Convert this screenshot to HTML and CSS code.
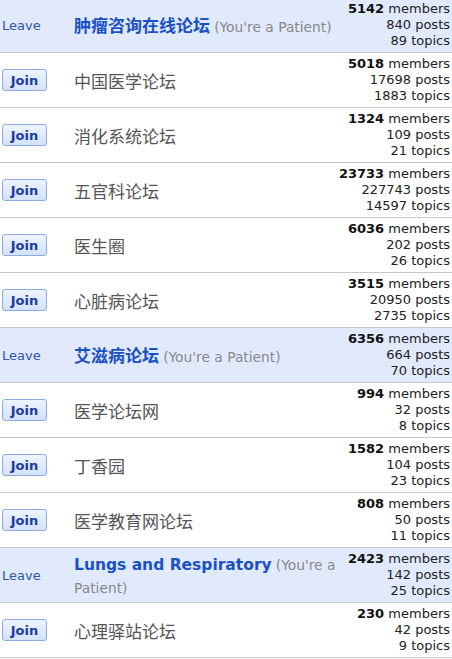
FILE: index.html
```
<!DOCTYPE html>
<html lang="en">
<head>
    <meta charset="UTF-8">
    <title>Forums</title>
    <link rel="stylesheet" href="styles.css">
</head>
<body>
    <div class="forum-list">
        <div class="forum-row mine">
            <div class="action"><a class="leave">Leave</a></div>
            <div class="name"><a class="title">肿瘤咨询在线论坛</a> <span class="note">(You're a Patient)</span></div>
            <div class="stats"><b>5142</b> members<br>840 posts<br>89 topics</div>
        </div>
        <div class="forum-row">
            <div class="action"><button class="join">Join</button></div>
            <div class="name"><span class="plain">中国医学论坛</span></div>
            <div class="stats"><b>5018</b> members<br>17698 posts<br>1883 topics</div>
        </div>
        <div class="forum-row">
            <div class="action"><button class="join">Join</button></div>
            <div class="name"><span class="plain">消化系统论坛</span></div>
            <div class="stats"><b>1324</b> members<br>109 posts<br>21 topics</div>
        </div>
        <div class="forum-row">
            <div class="action"><button class="join">Join</button></div>
            <div class="name"><span class="plain">五官科论坛</span></div>
            <div class="stats"><b>23733</b> members<br>227743 posts<br>14597 topics</div>
        </div>
        <div class="forum-row">
            <div class="action"><button class="join">Join</button></div>
            <div class="name"><span class="plain">医生圈</span></div>
            <div class="stats"><b>6036</b> members<br>202 posts<br>26 topics</div>
        </div>
        <div class="forum-row">
            <div class="action"><button class="join">Join</button></div>
            <div class="name"><span class="plain">心脏病论坛</span></div>
            <div class="stats"><b>3515</b> members<br>20950 posts<br>2735 topics</div>
        </div>
        <div class="forum-row mine">
            <div class="action"><a class="leave">Leave</a></div>
            <div class="name"><a class="title">艾滋病论坛</a> <span class="note">(You're a Patient)</span></div>
            <div class="stats"><b>6356</b> members<br>664 posts<br>70 topics</div>
        </div>
        <div class="forum-row">
            <div class="action"><button class="join">Join</button></div>
            <div class="name"><span class="plain">医学论坛网</span></div>
            <div class="stats"><b>994</b> members<br>32 posts<br>8 topics</div>
        </div>
        <div class="forum-row">
            <div class="action"><button class="join">Join</button></div>
            <div class="name"><span class="plain">丁香园</span></div>
            <div class="stats"><b>1582</b> members<br>104 posts<br>23 topics</div>
        </div>
        <div class="forum-row">
            <div class="action"><button class="join">Join</button></div>
            <div class="name"><span class="plain">医学教育网论坛</span></div>
            <div class="stats"><b>808</b> members<br>50 posts<br>11 topics</div>
        </div>
        <div class="forum-row mine">
            <div class="action"><a class="leave">Leave</a></div>
            <div class="name"><a class="title latin">Lungs and Respiratory</a> <span class="note">(You're a Patient)</span></div>
            <div class="stats"><b>2423</b> members<br>142 posts<br>25 topics</div>
        </div>
        <div class="forum-row">
            <div class="action"><button class="join">Join</button></div>
            <div class="name"><span class="plain">心理驿站论坛</span></div>
            <div class="stats"><b>230</b> members<br>42 posts<br>9 topics</div>
        </div>
    </div>
</body>
</html>
```

FILE: styles.css
```
/* forum list */
body {
    margin: 0;
    font-family: 'DejaVu Sans', Verdana, 'Noto Sans CJK SC', sans-serif;
    font-size: 13px;
    color: #222;
    background-color: #fff;
}
.forum-list {
    margin-top: -2px;
}
.forum-row {
    display: flex;
    align-items: center;
    height: 54px;
    border-bottom: 1px solid #c8c8c8;
}
.forum-row.mine {
    background-color: #e1eafd;
}
.action {
    width: 74px;
    flex-shrink: 0;
    padding-left: 2px;
    box-sizing: border-box;
}
.leave {
    color: #2f55a8;
    font-size: 13px;
}
.join {
    width: 45px;
    height: 22px;
    padding: 0;
    font-family: 'DejaVu Sans', Verdana, sans-serif;
    font-size: 13px;
    font-weight: bold;
    color: #1c3b9e;
    border: 1px solid #8daae4;
    border-radius: 3px;
    background: linear-gradient(#eef4ff, #d3e1fb);
    cursor: pointer;
}
.name {
    flex: 1;
    line-height: 23px;
    padding-top: 3px;
}
.title {
    color: #1a52c6;
    font-size: 17px;
    font-weight: bold;
    font-family: 'DejaVu Sans', Verdana, 'Noto Sans CJK SC', sans-serif;
}
.title.latin {
    font-size: 15.5px;
}
.note {
    color: #888;
    font-size: 13.8px;
}
.plain {
    color: #555;
    font-size: 17px;
    font-family: 'Noto Sans CJK SC', sans-serif;
}
.stats {
    width: 112px;
    flex-shrink: 0;
    text-align: right;
    line-height: 16px;
    padding-right: 2px;
    color: #222;
}
.stats b {
    color: #111;
}
```
